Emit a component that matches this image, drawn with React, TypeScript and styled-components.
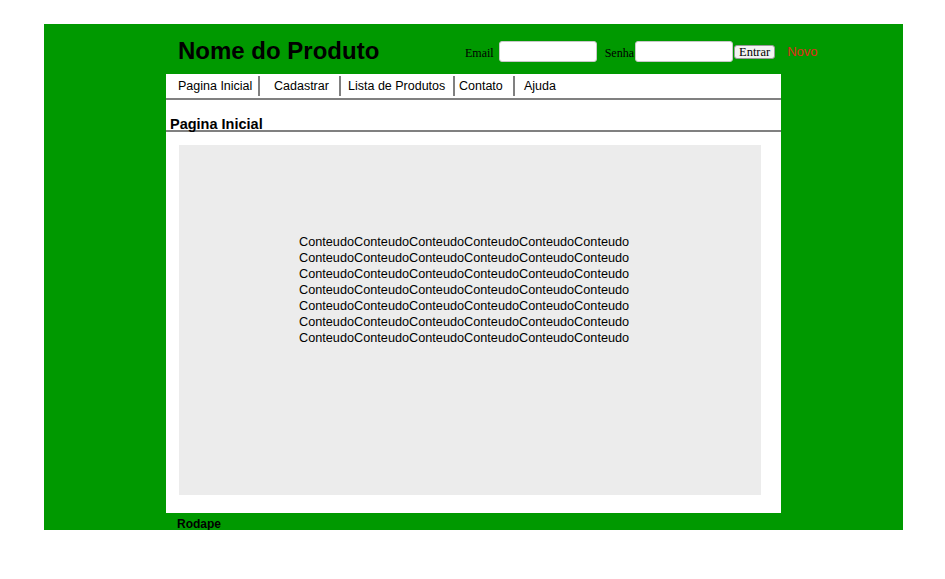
import React from 'react';
import styled, { createGlobalStyle } from 'styled-components';

const GlobalStyle = createGlobalStyle`
  body {
    margin: 0;
    background: #ffffff;
    font-family: 'Liberation Sans', Arial, sans-serif;
  }
`;

const Page = styled.div`
  margin: 24px 0 0 44px;
  width: 859px;
  height: 506px;
  background: #009900;
`;

const Column = styled.div`
  margin-left: 122px;
  width: 615px;
`;

const Header = styled.header`
  height: 50px;
  display: flex;
  align-items: flex-start;
`;

const Title = styled.h1`
  flex: none;
  box-sizing: border-box;
  width: 299px;
  margin: 0;
  padding: 13px 0 0 12px;
  font-family: 'Liberation Sans', Arial, sans-serif;
  font-size: 24px;
  font-weight: bold;
  line-height: 27px;
  color: #000;
  white-space: nowrap;
`;

const LoginForm = styled.form`
  display: flex;
  align-items: center;
  margin-top: 17px;
  font-family: 'Liberation Serif', 'Times New Roman', serif;
  font-size: 12px;
  color: #000;
  white-space: nowrap;
`;

const Label = styled.label<{ gap: number }>`
  margin-right: ${({ gap }) => gap}px;
  padding-top: 3px;
`;

const TextInput = styled.input<{ after: number }>`
  box-sizing: border-box;
  width: 98px;
  height: 21px;
  margin: 0 ${({ after }) => after}px 0 0;
  border: 1px solid #c8c8c8;
  border-radius: 3px;
  background: #fff;
`;

const Button = styled.button`
  box-sizing: border-box;
  height: 14px;
  padding: 0 4px;
  margin-top: 1px;
  font-family: 'Liberation Serif', 'Times New Roman', serif;
  font-size: 12.5px;
  line-height: 11px;
  color: #000;
  background: #f3f3f3;
  border: 1px solid #9a9a9a;
  border-radius: 3px;
`;

const NewLink = styled.a`
  margin-left: 12px;
  font-family: 'Liberation Sans', Arial, sans-serif;
  font-size: 13px;
  color: #e02a1a;
  text-decoration: none;
`;

const Panel = styled.main`
  background: #fff;
  height: 439px;
`;

const Nav = styled.nav`
  display: flex;
  height: 24px;
  border-bottom: 2px solid #808080;
`;

const NavItem = styled.a<{ width?: number; left: number; last?: boolean }>`
  flex: none;
  box-sizing: border-box;
  display: flex;
  align-items: center;
  width: ${({ width }) => (width ? `${width}px` : 'auto')};
  height: 20px;
  margin-top: 2px;
  padding-left: ${({ left }) => left}px;
  border-right: ${({ last }) => (last ? 'none' : '2px solid #808080')};
  font-family: 'Comic Sans MS', 'Liberation Sans', Arial, sans-serif;
  font-size: 12.5px;
  color: #000;
  text-decoration: none;
  white-space: nowrap;
`;

const SectionTitle = styled.h2`
  margin: 0;
  height: 32px;
  box-sizing: border-box;
  padding: 16px 0 0 4px;
  border-bottom: 2px solid #808080;
  font-family: 'Liberation Sans', Arial, sans-serif;
  font-size: 14.5px;
  font-weight: bold;
  line-height: 16px;
  color: #000;
`;

const ContentBox = styled.section`
  margin: 13px 20px 0 13px;
  height: 350px;
  box-sizing: border-box;
  padding: 89px 0 0 120px;
  background: #ececec;
  font-family: 'Liberation Sans', Arial, sans-serif;
  font-size: 12.7px;
  line-height: 16px;
  color: #000;
`;

const Line = styled.div`
  white-space: nowrap;
`;

const Footer = styled.footer`
  padding: 4px 0 0 11px;
  font-family: 'Liberation Sans', Arial, sans-serif;
  font-size: 12px;
  font-weight: bold;
  line-height: 14px;
  color: #000;
`;

const navItems = [
  { label: 'Pagina Inicial', width: 94, left: 12 },
  { label: 'Cadastrar', width: 81, left: 14 },
  { label: 'Lista de Produtos', width: 114, left: 7 },
  { label: 'Contato', width: 60, left: 4 },
  { label: 'Ajuda', left: 9 },
];

const conteudo = 'Conteudo'.repeat(6);

export default function App() {
  return (
    <>
      <GlobalStyle />
      <Page>
        <Column>
          <Header>
            <Title>Nome do Produto</Title>
            <LoginForm onSubmit={(e) => e.preventDefault()}>
              <Label gap={5}>Email</Label>
              <TextInput type="text" after={8} />
              <Label gap={1}>Senha</Label>
              <TextInput type="password" after={1} />
              <Button type="submit">Entrar</Button>
              <NewLink href="#">Novo</NewLink>
            </LoginForm>
          </Header>
          <Panel>
            <Nav>
              {navItems.map((item, i) => (
                <NavItem
                  key={item.label}
                  href="#"
                  width={item.width}
                  left={item.left}
                  last={i === navItems.length - 1}
                >
                  {item.label}
                </NavItem>
              ))}
            </Nav>
            <SectionTitle>Pagina Inicial</SectionTitle>
            <ContentBox>
              {Array.from({ length: 7 }, (_, i) => (
                <Line key={i}>{conteudo}</Line>
              ))}
            </ContentBox>
          </Panel>
          <Footer>Rodape</Footer>
        </Column>
      </Page>
    </>
  );
}
